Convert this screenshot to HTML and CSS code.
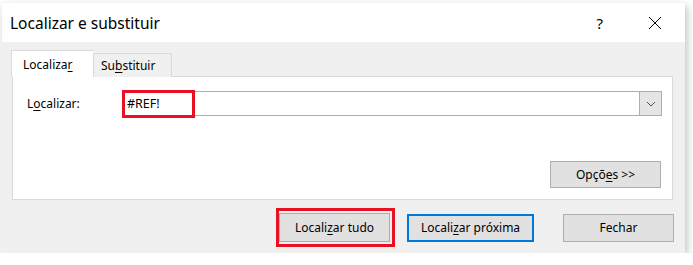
FILE: index.html
```html
<!DOCTYPE html>
<html lang="pt">
<head>
    <meta charset="UTF-8">
    <title>Localizar e substituir</title>
    <link rel="stylesheet" href="styles.css">
</head>
<body>
    <div class="dialog">
        <div class="title-bar">
            <span class="title">Localizar e substituir</span>
            <span class="help">?</span>
            <svg class="close" width="14" height="14" viewBox="0 0 14 14">
                <path d="M1 1 L13 13 M13 1 L1 13" stroke="#000" stroke-width="1" fill="none"/>
            </svg>
        </div>

        <div class="content">
            <div class="tabs">
                <div class="tab active">Localiza<u>r</u></div>
                <div class="tab">Su<u>b</u>stituir</div>
            </div>

            <div class="panel">
                <div class="find-row">
                    <label class="find-label">L<u>o</u>calizar:</label>
                    <div class="combo">
                        <span class="combo-text">#REF!</span>
                        <span class="highlight"></span>
                        <span class="combo-arrow">
                            <svg width="10" height="6" viewBox="0 0 10 6">
                                <path d="M1 1 L5 5 L9 1" stroke="#555" stroke-width="1" fill="none"/>
                            </svg>
                        </span>
                    </div>
                </div>
                <div class="options-row">
                    <button class="btn">Opçõ<u>e</u>s &gt;&gt;</button>
                </div>
            </div>

            <div class="actions">
                <div class="marked">
                    <button class="btn">Locali<u>z</u>ar tudo</button>
                </div>
                <button class="btn focused">Locali<u>z</u>ar próxima</button>
                <button class="btn close-btn">Fechar</button>
            </div>
        </div>
    </div>
</body>
</html>
```

FILE: styles.css
```css
body {
    margin: 0;
    background-color: #fff;
    font-family: "Noto Sans", "Open Sans", sans-serif;
    font-size: 12px;
    color: #000;
}

u {
    text-decoration-thickness: 1px;
    text-underline-offset: 2px;
}

.dialog {
    width: 683px;
    height: 250px;
    margin: 3px 0 0 2px;
    background-color: #f0f0f0;
    box-shadow: 2px 3px 8px rgba(0, 0, 0, 0.25);
    display: flex;
    flex-direction: column;
}

.title-bar {
    height: 39px;
    background-color: #fff;
    display: flex;
    align-items: center;
    padding: 0 0 0 8px;
}

.title {
    font-size: 15.5px;
    flex: 1;
}

.help {
    font-size: 15px;
    margin-right: 45px;
}

.close {
    margin-right: 23px;
}

.content {
    padding: 9px 9px 0 9px;
}

.tabs {
    display: flex;
    align-items: flex-end;
    height: 26px;
    position: relative;
    z-index: 1;
    margin-bottom: -1px;
}

.tab {
    height: 24px;
    line-height: 23px;
    border: 1px solid #d9d9d9;
    border-bottom: none;
    background-color: #f0f0f0;
    box-sizing: border-box;
}

.tab.active {
    height: 27px;
    width: 82px;
    background-color: #fff;
    padding: 0 0 0 11px;
    line-height: 28px;
    border-right: none;
}

.tab:not(.active) {
    width: 79px;
    padding: 0 0 0 7px;
}

.panel {
    height: 124px;
    background-color: #fff;
    border: 1px solid #d9d9d9;
    box-sizing: border-box;
    width: 661px;
    margin-left: 1px;
}

.find-row {
    display: flex;
    align-items: center;
    margin-top: 14px;
}

.find-label {
    width: 95px;
    padding-left: 14px;
}

.combo {
    position: relative;
    width: 540px;
    height: 25px;
    box-sizing: border-box;
    border: 1px solid #adadad;
    display: flex;
    align-items: center;
}

.combo-text {
    flex: 1;
    padding-left: 4px;
    font-size: 12.5px;
}

.combo-arrow {
    width: 21px;
    height: 23px;
    background-color: #e5e5e5;
    border-left: 1px solid #adadad;
    display: flex;
    align-items: center;
    justify-content: center;
}

.highlight {
    position: absolute;
    left: -1px;
    top: -2px;
    width: 73px;
    height: 28px;
    border: 3px solid #e81123;
    box-sizing: border-box;
}

.options-row {
    display: flex;
    justify-content: flex-end;
    margin-top: 45px;
    padding-right: 11px;
}

.btn {
    width: 111px;
    height: 28px;
    font-family: inherit;
    font-size: 12px;
    color: #000;
    background-color: #e1e1e1;
    border: 1px solid #adadad;
    padding: 0;
}

.options-row .btn {
    height: 27px;
}

.actions {
    display: flex;
    justify-content: flex-end;
    align-items: center;
    gap: 12px;
    margin-top: 8px;
    padding-right: 2px;
}

.close-btn {
    margin-left: 17px;
}

.marked {
    border: 3px solid #e81123;
    padding: 2px 2px 2px 0;
    display: flex;
}

.marked .btn {
    width: 111px;
    height: 29px;
}

.btn.focused {
    border: 2px solid #0078d7;
    width: 127px;
}
```
